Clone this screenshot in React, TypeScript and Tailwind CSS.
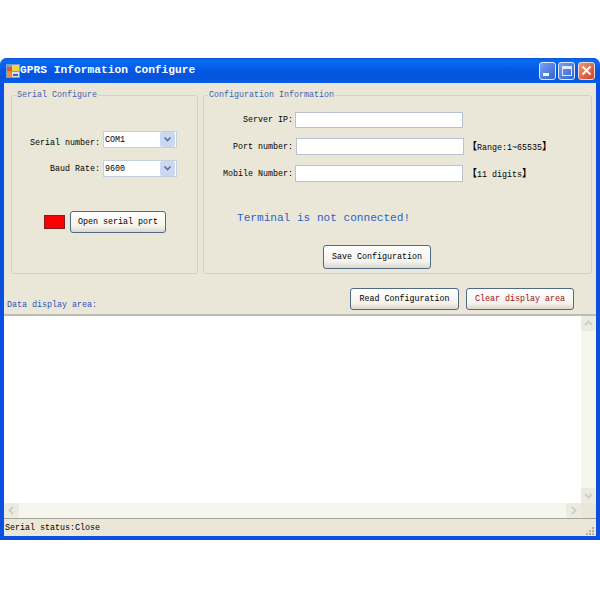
const mono = "font-['Liberation_Mono','Noto_Sans_CJK_SC',monospace]";

function ComboBox({ value }: { value: string }) {
  return (
    <div className="flex h-[17px] w-[74px] items-center justify-between border border-[#c5d0de] bg-white pl-[1px] pr-[1px]">
      <span className="text-[8.33px] leading-[12px] text-black">{value}</span>
      <div className="flex h-[15px] w-[15px] items-center justify-center rounded-[2px] bg-[#cbd8f4]">
        <svg width="9" height="7" viewBox="0 0 9 7">
          <path d="M1.5 1.5 L4.5 4.5 L7.5 1.5" fill="none" stroke="#5a6d90" strokeWidth="1.6" />
        </svg>
      </div>
    </div>
  );
}

function XpButton({ label, w, h = 'h-[22px]', color = 'text-black' }: { label: string; w: string; h?: string; color?: string }) {
  return (
    <button
      className={`${w} ${h} ${color} rounded-[3px] border border-[#4f6a85] bg-[linear-gradient(#ffffff,#f4f3ee_70%,#dcd8cc)] text-[8.33px] leading-none`}
    >
      {label}
    </button>
  );
}

function TextInput({ h = 'h-[17px]', ml }: { h?: string; ml: string }) {
  return <div className={`${h} ${ml} w-[168px] border border-[#b9c3cf] bg-white`} />;
}

function Chevron({ d }: { d: string }) {
  return (
    <svg width="9" height="9" viewBox="0 0 9 9">
      <path d={d} fill="none" stroke="#cfd0c4" strokeWidth="2" />
    </svg>
  );
}

// hint text with the wide CJK brackets
function Hint({ text, ml }: { text: string; ml: string }) {
  return (
    <span className={`${ml} mt-[2px] text-[8.33px] leading-[10px] text-black`}>
      <span className="text-[10px] font-bold">【</span>
      {text}
      <span className="text-[10px] font-bold">】</span>
    </span>
  );
}

export default function App() {
  return (
    <div className={`${mono} h-[600px] w-[600px] bg-white pt-[58px]`}>
      <div className="flex h-[482px] w-[600px] flex-col overflow-hidden rounded-t-[7px] bg-[#0a4fe0]">
        {/* Title bar */}
        <div className="flex h-[25px] shrink-0 items-center bg-[linear-gradient(#0a57d8,#0a6cf6_12%,#0459e4_45%,#0453dd_80%,#0a5fe8)] pl-[6px] pr-[5px]">
          <svg width="14" height="14" viewBox="0 0 14 14" className="shrink-0">
            <rect x="0" y="0" width="14" height="14" fill="#7f9cc8" />
            <rect x="1" y="3" width="5" height="4" fill="#e2552c" />
            <rect x="6" y="1" width="7" height="6" fill="#f6cf4c" />
            <rect x="1" y="8" width="4" height="5" fill="#f08a3c" />
            <rect x="6" y="8" width="7" height="5" fill="#d6dfeb" />
            <rect x="7" y="10" width="5" height="2" fill="#3c68ad" />
          </svg>
          <span className="text-[11.2px] font-bold leading-none tracking-[0.03px] text-white">GPRS Information Configure</span>
          <div className="ml-auto flex items-center">
            <div className="relative h-[18px] w-[17px] rounded-[3px] border border-[#dfe8fb] bg-[linear-gradient(135deg,#7ba2ee,#2f62d8)]">
              <div className="absolute bottom-[3px] left-[3px] h-[3px] w-[6px] bg-white" />
            </div>
            <div className="ml-[2px] flex h-[18px] w-[17px] items-center justify-center rounded-[3px] border border-[#dfe8fb] bg-[linear-gradient(135deg,#7ba2ee,#2f62d8)]">
              <div className="h-[10px] w-[10px] border border-t-[3px] border-[#dfe8fb]" />
            </div>
            <div className="ml-[3px] flex h-[18px] w-[17px] items-center justify-center rounded-[3px] border border-[#f3d8cc] bg-[linear-gradient(135deg,#eb9a7c,#cf4022)]">
              <svg width="11" height="11" viewBox="0 0 11 11">
                <path d="M1.5 1.5 L9.5 9.5 M9.5 1.5 L1.5 9.5" stroke="#fff" strokeWidth="2" />
              </svg>
            </div>
          </div>
        </div>

        {/* Client area */}
        <div className="mx-[4px] mb-[4px] flex min-h-0 flex-1 flex-col bg-[#ebe7d8]">
          <div className="mt-[7px] flex gap-[5px] pl-[7px]">
            <fieldset className="h-[184px] w-[187px] rounded-[3px] border border-[#d6d2be]">
              <legend className="ml-[4px] px-[1px] text-[8.33px] leading-[10px] text-[#3f62ad]">Serial Configure</legend>
              <div className="mt-[31px] flex items-center">
                <span className="mr-[3px] mt-[7px] w-[88px] text-right text-[8.33px] leading-[10px] text-black">Serial number:</span>
                <ComboBox value="COM1" />
              </div>
              <div className="mt-[12px] flex items-center">
                <span className="mr-[3px] w-[88px] text-right text-[8.33px] leading-[10px] text-black">Baud Rate:</span>
                <ComboBox value="9600" />
              </div>
              <div className="ml-[32px] mt-[34px] flex items-center">
                <div className="h-[14px] w-[21px] border border-[#7a2020] bg-[#fa0000]" />
                <XpButton label="Open serial port" w="ml-[5px] w-[96px]" />
              </div>
            </fieldset>

            <fieldset className="h-[184px] w-[389px] rounded-[3px] border border-[#d6d2be]">
              <legend className="ml-[4px] px-[1px] text-[8.33px] leading-[10px] text-[#3f62ad]">Configuration Information</legend>
              <div className="mt-[12px] flex items-center">
                <span className="w-[89px] text-right text-[8.33px] leading-[10px] text-black">Server IP:</span>
                <TextInput h="h-[16px]" ml="ml-[2px]" />
              </div>
              <div className="mt-[10px] flex items-center">
                <span className="w-[89px] text-right text-[8.33px] leading-[10px] text-black">Port number:</span>
                <TextInput ml="ml-[3px]" />
                <Hint text="Range:1~65535" ml="ml-[3px]" />
              </div>
              <div className="mt-[10px] flex items-center">
                <span className="w-[89px] text-right text-[8.33px] leading-[10px] text-black">Mobile Number:</span>
                <TextInput ml="ml-[2px]" />
                <Hint text="11 digits" ml="ml-[4px]" />
              </div>
              <div className="ml-[33px] mt-[28px] text-[11.1px] leading-[16px] text-[#2a62c8]">Terminal is not connected!</div>
              <div className="ml-[119px] mt-[19px] flex">
                <XpButton label="Save Configuration" w="w-[108px]" h="h-[24px]" />
              </div>
            </fieldset>
          </div>

          {/* Data area header */}
          <div className="flex h-[40px] shrink-0 items-end pb-[4px] pl-[3px]">
            <span className="text-[8.33px] leading-[10px] text-[#2a55b8]">Data display area:</span>
            <div className="ml-auto mr-[22px] flex gap-[7px]">
              <XpButton label="Read Configuration" w="w-[109px]" />
              <XpButton label="Clear display area" w="w-[108px]" color="text-[#a01010]" />
            </div>
          </div>

          {/* Display box with disabled scrollbars */}
          <div className="flex h-[204px] shrink-0 flex-col border-t-2 border-[#bcbcb6] bg-white">
            <div className="flex min-h-0 flex-1">
              <div className="flex-1" />
              <div className="flex w-[15px] flex-col justify-between bg-[#f6f5ee]">
                <div className="flex h-[15px] items-center justify-center rounded-[2px] bg-[#ecebe0]">
                  <Chevron d="M1 6 L4.5 2.5 L8 6" />
                </div>
                <div className="flex h-[15px] items-center justify-center rounded-[2px] bg-[#ecebe0]">
                  <Chevron d="M1 3 L4.5 6.5 L8 3" />
                </div>
              </div>
            </div>
            <div className="flex h-[15px] shrink-0">
              <div className="flex flex-1 justify-between bg-[#f6f5ee]">
                <div className="flex w-[15px] items-center justify-center rounded-[2px] bg-[#ecebe0]">
                  <Chevron d="M6 1 L2.5 4.5 L6 8" />
                </div>
                <div className="flex w-[15px] items-center justify-center rounded-[2px] bg-[#ecebe0]">
                  <Chevron d="M3 1 L6.5 4.5 L3 8" />
                </div>
              </div>
              <div className="w-[15px] bg-[#ebe7d8]" />
            </div>
          </div>

          {/* Status bar */}
          <div className="flex min-h-0 flex-1 items-center border-t border-[#a5a398] pl-[1px]">
            <span className="text-[8.33px] leading-[10px] text-black">Serial status:Close</span>
            <svg width="10" height="10" viewBox="0 0 10 10" className="ml-auto mt-[7px] mr-[1px]">
              <path d="M7 1h2v2H7zM4 4h2v2H4zM7 4h2v2H7zM1 7h2v2H1zM4 7h2v2H4zM7 7h2v2H7z" fill="#b5b19f" />
            </svg>
          </div>
        </div>
      </div>
    </div>
  );
}
